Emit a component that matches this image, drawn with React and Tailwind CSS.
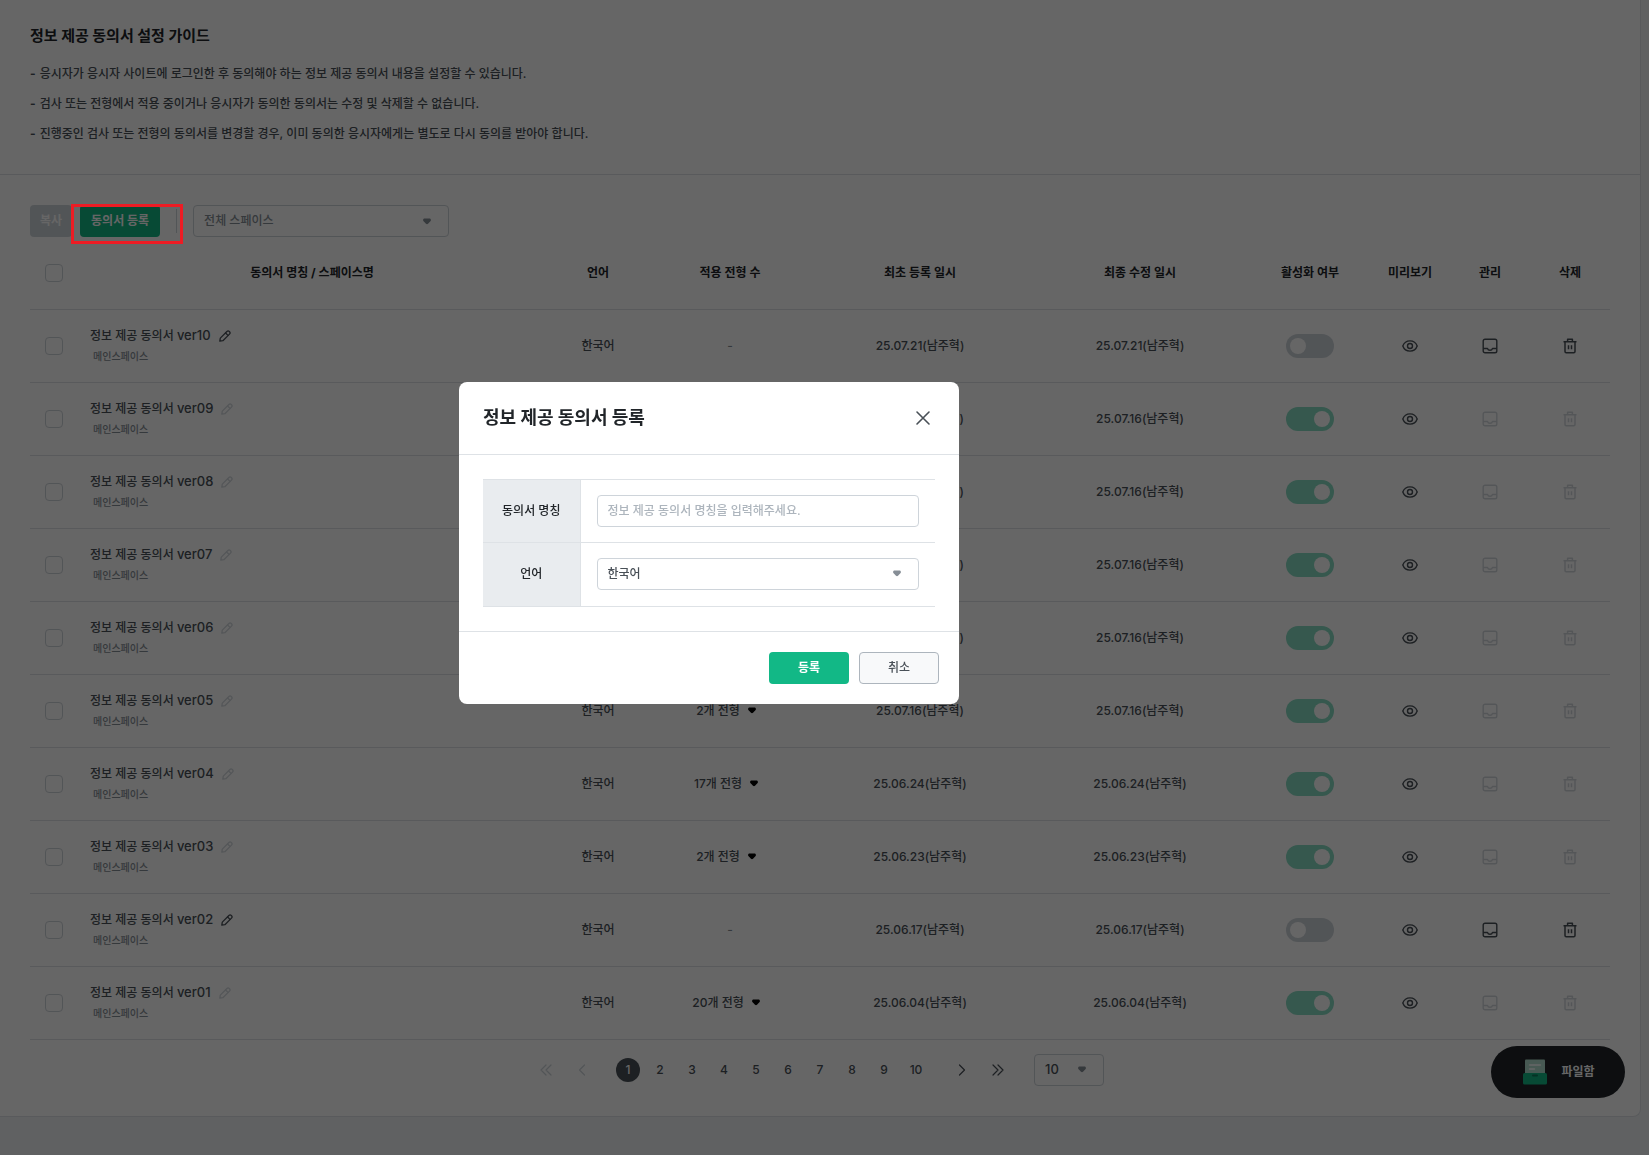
import { useState } from 'react';

const initialRows = [
  { ver: 'ver10', count: null, date: '25.07.21(남주혁)' },
  { ver: 'ver09', count: '1개 전형', date: '25.07.16(남주혁)' },
  { ver: 'ver08', count: '1개 전형', date: '25.07.16(남주혁)' },
  { ver: 'ver07', count: '1개 전형', date: '25.07.16(남주혁)' },
  { ver: 'ver06', count: '1개 전형', date: '25.07.16(남주혁)' },
  { ver: 'ver05', count: '2개 전형', date: '25.07.16(남주혁)' },
  { ver: 'ver04', count: '17개 전형', date: '25.06.24(남주혁)' },
  { ver: 'ver03', count: '2개 전형', date: '25.06.23(남주혁)' },
  { ver: 'ver02', count: null, date: '25.06.17(남주혁)' },
  { ver: 'ver01', count: '20개 전형', date: '25.06.04(남주혁)' },
];

const guides = [
  '응시자가 응시자 사이트에 로그인한 후 동의해야 하는 정보 제공 동의서 내용을 설정할 수 있습니다.',
  '검사 또는 전형에서 적용 중이거나 응시자가 동의한 동의서는 수정 및 삭제할 수 없습니다.',
  '진행중인 검사 또는 전형의 동의서를 변경할 경우, 이미 동의한 응시자에게는 별도로 다시 동의를 받아야 합니다.',
];

function Caret({ className }) {
  return (
    <svg viewBox="0 0 8 7" className={`h-[7px] w-2 ${className}`} fill="currentColor" aria-hidden="true">
      <path d="M1.6 0.5h4.8c1.5 0 2 1.7 1 2.7L5 5.8c-.6.6-1.4.6-2 0L.6 3.2C-.4 2.2.1.5 1.6.5z" />
    </svg>
  );
}

function PencilIcon() {
  return (
    <svg viewBox="0 0 12 12" className="h-3 w-3" fill="none" stroke="currentColor" strokeWidth="1.3" strokeLinecap="round" strokeLinejoin="round" aria-hidden="true">
      <path d="M.8 11.2l.5-3.100 6.600-6.600a1.700 1.700 0 0 1 2.400 0l.2.2a1.700 1.700 0 0 1 0 2.400l-6.600 6.600z" />
      <path d="M6.600 3l2.400 2.400" />
    </svg>
  );
}

function EyeIcon() {
  return (
    <svg viewBox="0 0 16 12" className="h-3 w-4" fill="none" stroke="currentColor" strokeWidth="1.4" aria-hidden="true">
      <path d="M.8 6C2 2.700 4.700.9 8 .9s6 1.800 7.200 5.100c-1.200 3.300-3.900 5.100-7.200 5.100S2 9.300.8 6z" />
      <circle cx="8" cy="6" r="2.500" />
    </svg>
  );
}

function InboxIcon() {
  return (
    <svg viewBox="0 0 16 16" className="h-4 w-4" fill="none" stroke="currentColor" strokeWidth="1.400" strokeLinejoin="round" aria-hidden="true">
      <rect x="1.200" y="1.200" width="13.600" height="13.600" rx="1.800" />
      <path d="M1.200 10.500h4.300c.3 1 1.200 1.700 2.500 1.700s2.200-.7 2.500-1.700h4.300" />
    </svg>
  );
}

function TrashIcon() {
  return (
    <svg viewBox="0 0 14 16" className="h-4 w-3.5" fill="none" stroke="currentColor" strokeWidth="1.500" strokeLinejoin="round" aria-hidden="true">
      <path d="M.5 3.700h13M4.600 3.500V1.300h4.800v2.200" />
      <path d="M2 3.800v9.800c0 .7.500 1.200 1.200 1.200h7.600c.7 0 1.200-.5 1.200-1.200V3.800" />
      <path d="M5.500 7.300v4M8.500 7.300v4" />
    </svg>
  );
}

function Chevron({ double, flip }) {
  return (
    <svg viewBox="0 0 12 12" className={`h-3 w-3 ${flip ? 'rotate-180' : ''}`} fill="none" stroke="currentColor" strokeWidth="1.200" strokeLinecap="round" strokeLinejoin="round" aria-hidden="true">
      {double ? <path d="M1 1l5 5-5 5M6 1l5 5-5 5" /> : <path d="M3.500 1l5 5-5 5" />}
    </svg>
  );
}

function FileBoxIcon() {
  return (
    <svg viewBox="0 0 24 26" className="h-[26px] w-6" aria-hidden="true">
      <rect x="2" y="0.500" width="20" height="15" rx="1" fill="#b2dfd0" />
      <path d="M6.500 6h11M6.500 10h5" stroke="#fff" strokeWidth="1.400" strokeLinecap="round" />
      <rect x="0" y="14" width="24" height="11.500" rx="1.500" fill="#12b886" />
      <rect x="9" y="15.500" width="6" height="2" rx="1" fill="#0b7d5b" />
    </svg>
  );
}

function CheckBox({ label }) {
  return (
    <input
      type="checkbox"
      aria-label={label}
      className="block mx-auto h-[18px] w-[18px] appearance-none rounded border border-[#ced4da] checked:bg-[#12b886]"
    />
  );
}

function SelectBox({ id, label, options, className, caretClass }) {
  return (
    <div className="relative flex items-center">
      <select id={id} aria-label={label} className={`h-8 appearance-none rounded border border-[#ced4da] bg-white pl-2.5 ${className}`}>
        {options.map((option) => (
          <option key={option}>{option}</option>
        ))}
      </select>
      <Caret className={`pointer-events-none absolute ${caretClass}`} />
    </div>
  );
}

function ConsentRow({ row }) {
  // consents already used by a screening can't be edited or removed
  const locked = row.count !== null;
  const actionColor = locked ? 'text-[#d3d8dd]' : 'text-[#495057]';

  return (
    <tr className="h-[73px] border-b border-[#dee2e6]">
      <td><CheckBox label={`${row.ver} 선택`} /></td>
      <td className="px-3 text-left">
        <div className="flex items-center gap-2 leading-5">
          <span>정보 제공 동의서 <span className="text-[13px]">{row.ver}</span></span>
          <button type="button" disabled={locked} aria-label="명칭 수정" className={actionColor}>
            <PencilIcon />
          </button>
        </div>
        <p className="pl-[3px] text-[10px] leading-5 text-[#868e96]">메인스페이스</p>
      </td>
      <td>한국어</td>
      <td>
        {row.count ? (
          <button type="button" className="inline-flex items-center gap-2 pr-2">
            {row.count} <Caret className="text-black" />
          </button>
        ) : (
          <span className="text-[#868e96]">-</span>
        )}
      </td>
      <td>{row.date}</td>
      <td>{row.date}</td>
      <td>
        <label className="relative mx-auto block h-6 w-12">
          <input
            type="checkbox"
            role="switch"
            aria-label="활성화 여부"
            defaultChecked={locked}
            className="peer block h-6 w-12 appearance-none rounded-full bg-[#ced4da] checked:bg-[#88dbc2]"
          />
          <span className="pointer-events-none absolute left-1 top-1 h-4 w-4 rounded-full bg-white peer-checked:left-7" />
        </label>
      </td>
      <td>
        <button type="button" aria-label="미리보기" className="block mx-auto text-[#495057]"><EyeIcon /></button>
      </td>
      <td>
        <button type="button" disabled={locked} aria-label="관리" className={`block mx-auto ${actionColor}`}><InboxIcon /></button>
      </td>
      <td>
        <button type="button" disabled={locked} aria-label="삭제" className={`block mx-auto ${actionColor}`}><TrashIcon /></button>
      </td>
    </tr>
  );
}

function Pagination({ page, setPage }) {
  const arrow = 'flex h-6 w-6 items-center justify-center';
  return (
    <nav aria-label="페이지" className="flex items-center justify-center pr-0.5 pt-3.5 text-xs">
      <div className="flex gap-3 text-[#ced4da]">
        <button type="button" disabled aria-label="처음" className={arrow}><Chevron double flip /></button>
        <button type="button" disabled aria-label="이전" className={arrow}><Chevron flip /></button>
      </div>
      <div className="mx-[22px] flex gap-2">
        {[1, 2, 3, 4, 5, 6, 7, 8, 9, 10].map((n) => (
          <button
            key={n}
            type="button"
            onClick={() => setPage(n)}
            className={`h-6 w-6 rounded-full ${n === page ? 'bg-[#495057] text-white' : ''}`}
          >
            {n}
          </button>
        ))}
      </div>
      <div className="mr-6 flex gap-3">
        <button type="button" aria-label="다음" className={arrow}><Chevron /></button>
        <button type="button" aria-label="마지막" className={arrow}><Chevron double /></button>
      </div>
      <SelectBox label="페이지당 개수" options={['10', '20', '50']} className="w-[70px] text-[13px]" caretClass="right-[18px] text-[#868e96]" />
    </nav>
  );
}

function RegisterModal({ onClose }) {
  return (
    <div className="fixed inset-0 z-40 flex items-center justify-center bg-black/60 pb-[70px] pr-[231px]">
      <div role="dialog" aria-modal="true" aria-labelledby="modal-title" className="w-[500px] rounded-lg bg-white">
        <header className="flex h-[73px] items-center justify-between border-b border-[#dee2e6] px-6">
          <h2 id="modal-title" className="text-lg font-bold text-[#212529]">정보 제공 동의서 등록</h2>
          <button type="button" onClick={onClose} aria-label="닫기" className="text-[#495057]">
            <svg viewBox="0 0 24 24" className="h-6 w-6" fill="none" stroke="currentColor" strokeWidth="1.600" strokeLinecap="round">
              <path d="M6 6l12 12M18 6L6 18" />
            </svg>
          </button>
        </header>

        <div className="px-6 py-6">
          <table className="w-full border-collapse border-y border-[#dee2e6]">
            <tbody>
              <tr className="h-[63px] border-b border-[#dee2e6]">
                <th className="w-[97px] border-r border-[#dee2e6] bg-[#e9ecef] font-medium text-[#212529]">
                  <label htmlFor="consent-name">동의서 명칭</label>
                </th>
                <td className="px-4">
                  <input
                    id="consent-name"
                    type="text"
                    placeholder="정보 제공 동의서 명칭을 입력해주세요."
                    className="block h-8 w-full rounded border border-[#ced4da] px-2.5 placeholder:text-[#adb5bd]"
                  />
                </td>
              </tr>
              <tr className="h-16">
                <th className="border-r border-[#dee2e6] bg-[#e9ecef] font-medium text-[#212529]">
                  <label htmlFor="consent-lang">언어</label>
                </th>
                <td className="px-4 pb-px">
                  <SelectBox id="consent-lang" options={['한국어', '영어']} className="w-full" caretClass="right-[18px] text-[#868e96]" />
                </td>
              </tr>
            </tbody>
          </table>
        </div>

        <footer className="flex justify-end gap-2.5 border-t border-[#dee2e6] p-5">
          <button type="button" className="h-8 w-20 rounded bg-[#12b886] font-bold text-white">등록</button>
          <button type="button" onClick={onClose} className="h-8 w-20 rounded border border-[#adb5bd] bg-[#f8f9fa]">취소</button>
        </footer>
      </div>
    </div>
  );
}

function App() {
  const [page, setPage] = useState(1);
  const [modalOpen, setModalOpen] = useState(true);

  return (
    <div className="min-h-screen bg-[#f1f3f5] pr-2 font-['Inter','Noto_Sans_CJK_KR',sans-serif] text-xs font-medium text-[#495057]">
      <main className="rounded-br-lg border-b border-r border-[#dee2e6] bg-white">
        <section className="border-b border-[#dee2e6] px-[30px] pb-[25px] pt-6">
          <h1 className="text-[15px] font-bold leading-6 text-[#212529]">정보 제공 동의서 설정 가이드</h1>
          <ul className="mt-[11px]">
            {guides.map((text) => (
              <li key={text} className="leading-[30px]">
                <span className="mr-1 font-bold">-</span>{text}
              </li>
            ))}
          </ul>
        </section>

        <section className="px-[30px] pb-[30px] pt-[30px]">
          <div className="flex items-center">
            <button type="button" disabled className="h-8 rounded bg-[#ced4da] px-2.5 font-bold text-white">복사</button>
            <div className="relative ml-2 flex items-center">
              <button type="button" onClick={() => setModalOpen(true)} className="h-8 w-20 rounded bg-[#12b886] font-bold text-white">
                동의서 등록
              </button>
              <span className="ml-4 h-6 w-px bg-[#ced4da]" />
              <div className="pointer-events-none absolute -left-[9px] -right-[6px] -top-px z-50 h-10 border-3 border-[#ed1c24]" />
            </div>
            <div className="ml-4">
              <SelectBox label="스페이스" options={['전체 스페이스', '메인스페이스']} className="w-64 text-[#868e96]" caretClass="right-[18px] text-[#868e96]" />
            </div>
          </div>

          <table className="w-full table-fixed border-collapse text-center">
            <colgroup>
              <col className="w-12" />
              <col />
              <col className="w-[104px]" />
              <col className="w-40" />
              <col className="w-[220px]" />
              <col className="w-[220px]" />
              <col className="w-[120px]" />
              <col className="w-20" />
              <col className="w-20" />
              <col className="w-20" />
            </colgroup>
            <thead>
              <tr className="h-[72px] border-b border-[#dee2e6] text-[#212529]">
                <th><CheckBox label="전체 선택" /></th>
                {['동의서 명칭 / 스페이스명', '언어', '적용 전형 수', '최초 등록 일시', '최종 수정 일시', '활성화 여부', '미리보기', '관리', '삭제'].map((name) => (
                  <th key={name} className="font-bold">{name}</th>
                ))}
              </tr>
            </thead>
            <tbody>
              {initialRows.map((row) => (
                <ConsentRow key={row.ver} row={row} />
              ))}
            </tbody>
          </table>

          <Pagination page={page} setPage={setPage} />
        </section>
      </main>

      <button type="button" className="fixed bottom-[57px] right-6 flex h-[52px] w-[134px] items-center justify-center gap-3.5 rounded-full bg-[#212529] pl-0.5 text-xs font-bold text-white">
        <FileBoxIcon />
        파일함
      </button>

      {modalOpen && <RegisterModal onClose={() => setModalOpen(false)} />}
    </div>
  );
}

export default App;
